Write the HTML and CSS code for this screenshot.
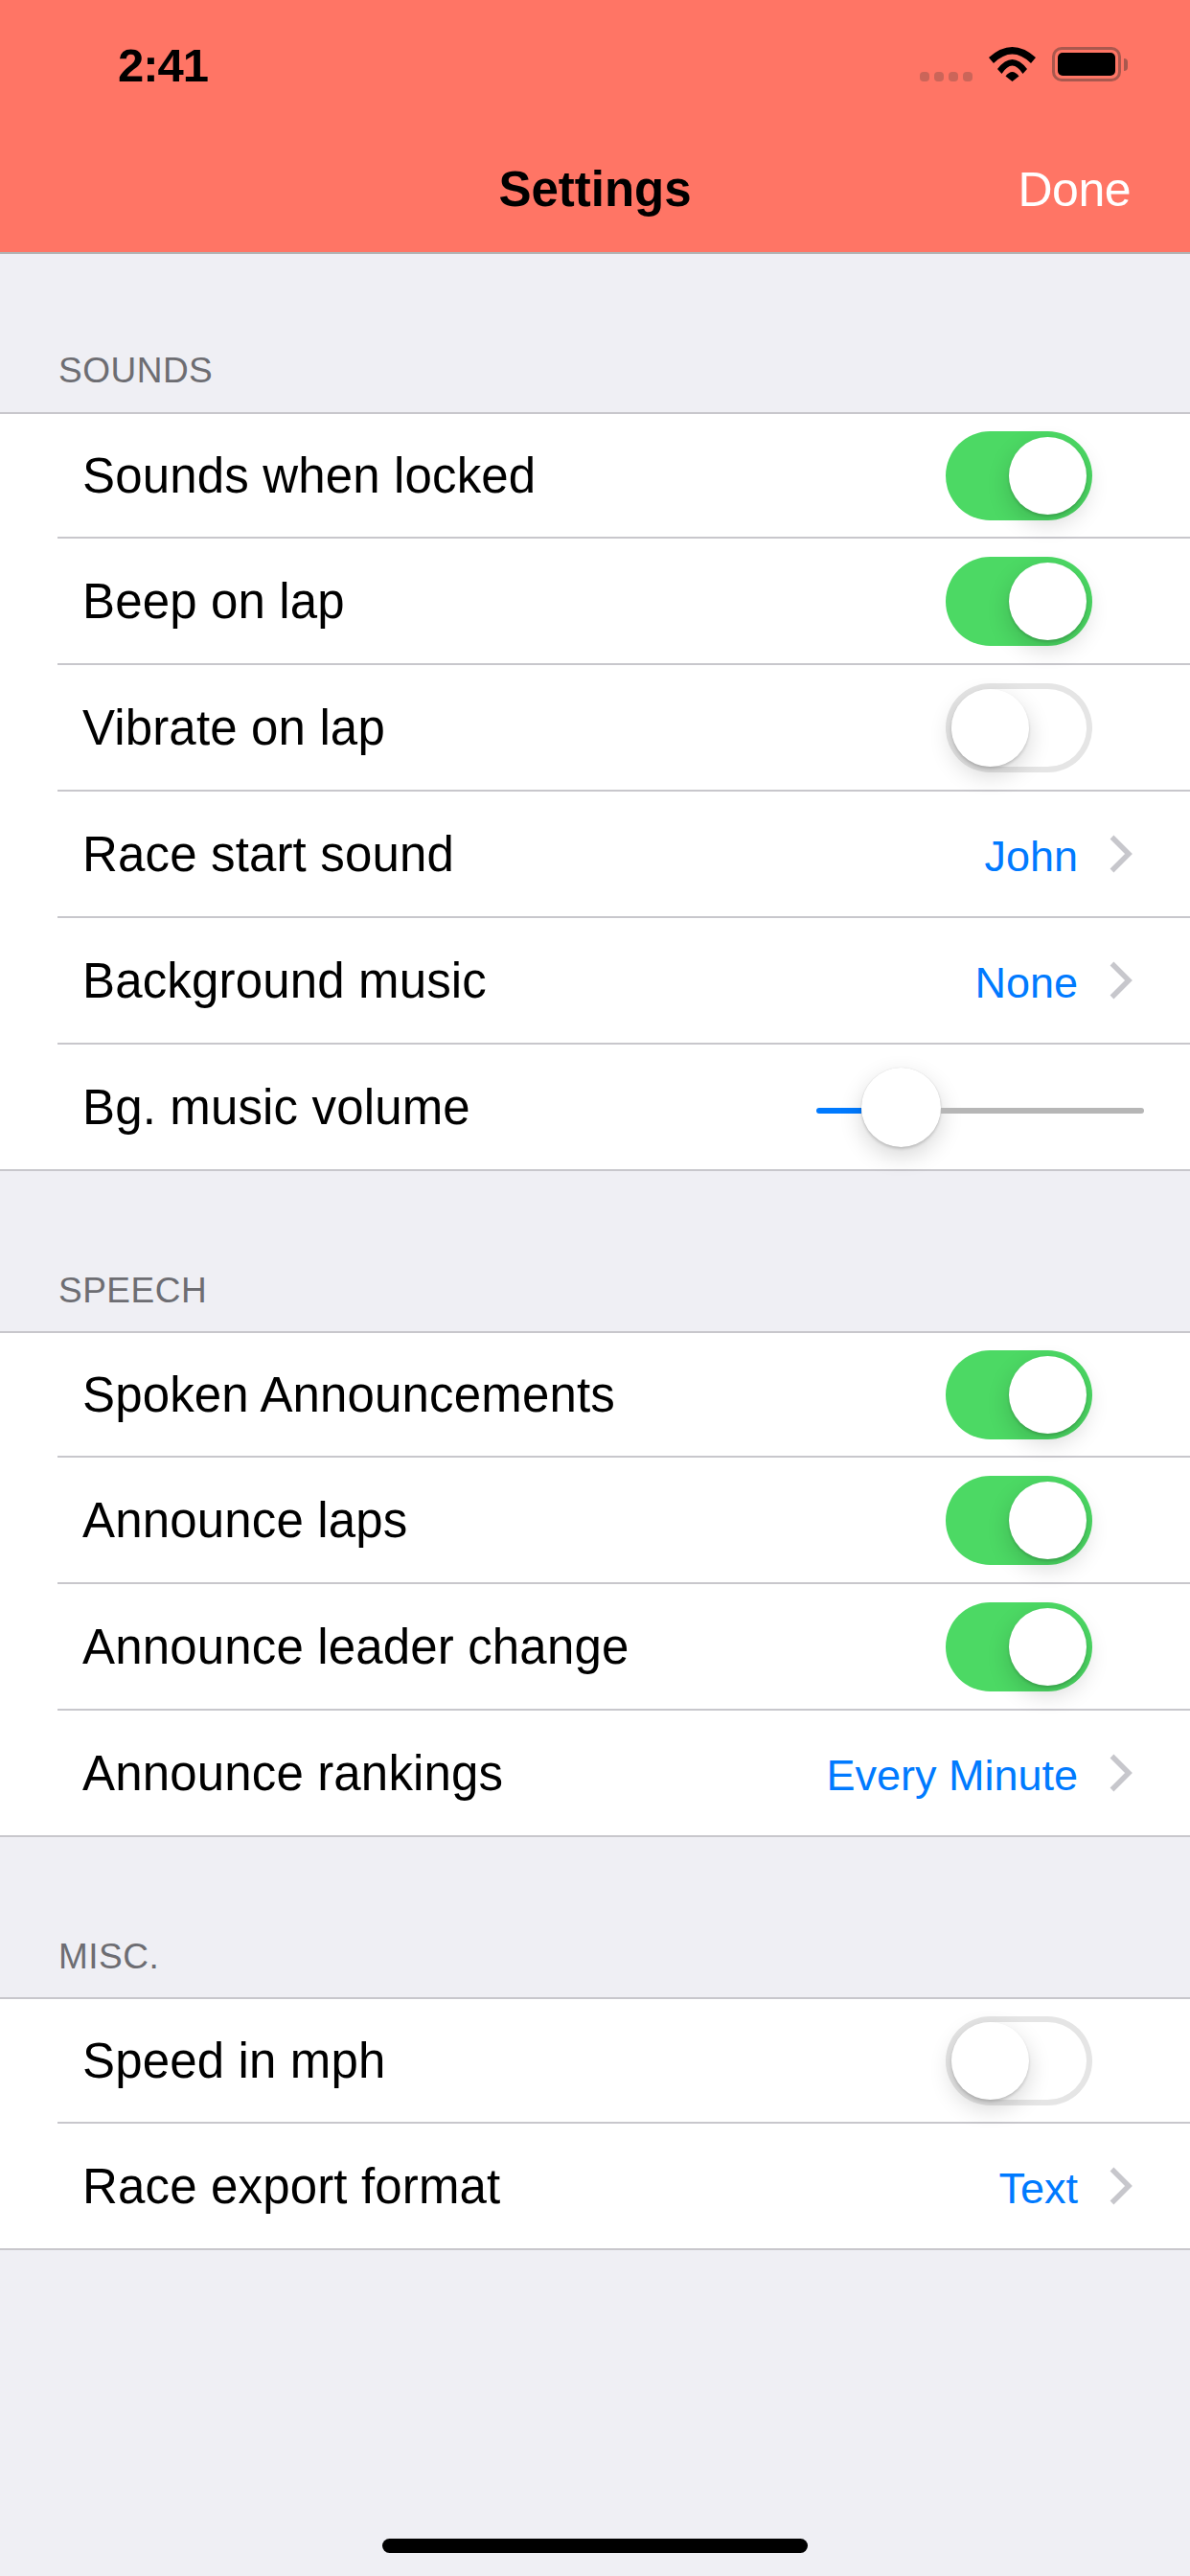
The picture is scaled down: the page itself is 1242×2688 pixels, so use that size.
FILE: index.html
```html
<!DOCTYPE html>
<html lang="en">
<head>
    <meta charset="UTF-8">
    <title>Settings</title>
    <link rel="stylesheet" href="styles.css">
</head>
<body>
    <!-- Header -->
    <div class="header">
        <div class="status-bar">
            <span class="time">2:41</span>
            <div class="status-icons">
                <div class="signal"><i></i><i></i><i></i><i></i></div>
                <svg class="wifi" width="49" height="36" viewBox="0 0 49 36">
                    <path d="M0 11Q24.500 -11 49 11L44 17Q24.500 -2 5 17Z" fill="#000"/>
                    <path d="M9 23Q24.500 3 40 23L35.500 28Q24.500 11 13.500 28Z" fill="#000"/>
                    <path d="M17.500 30.500Q24.500 21.500 31.500 30.500L24.500 36Z" fill="#000"/>
                </svg>
                <div class="battery"><div class="battery-level"></div></div>
                <div class="battery-cap"></div>
            </div>
        </div>
        <div class="nav-bar">
            <span class="nav-title">Settings</span>
            <span class="nav-done">Done</span>
        </div>
    </div>

    <!-- Sounds -->
    <div class="section-title first">SOUNDS</div>
    <div class="group">
        <div class="row"><span class="label">Sounds when locked</span><span class="toggle on"><i></i></span></div>
        <div class="row"><span class="label">Beep on lap</span><span class="toggle on"><i></i></span></div>
        <div class="row"><span class="label">Vibrate on lap</span><span class="toggle"><i></i></span></div>
        <div class="row">
            <span class="label">Race start sound</span>
            <span class="value">John</span>
            <svg class="chevron" width="24" height="40" viewBox="0 0 24 40"><path d="M2.500 2.500L20 20L2.500 37.500" fill="none" stroke="#c7c7cc" stroke-width="5.500"/></svg>
        </div>
        <div class="row">
            <span class="label">Background music</span>
            <span class="value">None</span>
            <svg class="chevron" width="24" height="40" viewBox="0 0 24 40"><path d="M2.500 2.500L20 20L2.500 37.500" fill="none" stroke="#c7c7cc" stroke-width="5.500"/></svg>
        </div>
        <div class="row">
            <span class="label">Bg. music volume</span>
            <div class="slider">
                <div class="slider-fill"></div>
                <div class="slider-thumb"></div>
                <div class="slider-rest"></div>
            </div>
        </div>
    </div>

    <!-- Speech -->
    <div class="section-title">SPEECH</div>
    <div class="group">
        <div class="row"><span class="label">Spoken Announcements</span><span class="toggle on"><i></i></span></div>
        <div class="row"><span class="label">Announce laps</span><span class="toggle on"><i></i></span></div>
        <div class="row"><span class="label">Announce leader change</span><span class="toggle on"><i></i></span></div>
        <div class="row">
            <span class="label">Announce rankings</span>
            <span class="value">Every Minute</span>
            <svg class="chevron" width="24" height="40" viewBox="0 0 24 40"><path d="M2.500 2.500L20 20L2.500 37.500" fill="none" stroke="#c7c7cc" stroke-width="5.500"/></svg>
        </div>
    </div>

    <!-- Misc -->
    <div class="section-title">MISC.</div>
    <div class="group">
        <div class="row"><span class="label">Speed in mph</span><span class="toggle"><i></i></span></div>
        <div class="row">
            <span class="label">Race export format</span>
            <span class="value">Text</span>
            <svg class="chevron" width="24" height="40" viewBox="0 0 24 40"><path d="M2.500 2.500L20 20L2.500 37.500" fill="none" stroke="#c7c7cc" stroke-width="5.500"/></svg>
        </div>
    </div>

    <div class="home-indicator"></div>
</body>
</html>
```

FILE: styles.css
```css
html, body {
    margin: 0;
    padding: 0;
}
body {
    position: relative;
    width: 1242px;
    height: 2688px;
    overflow: hidden;
    background-color: #efeff4;
    font-family: "Liberation Sans", Arial, sans-serif;
    color: #000;
}
.header {
    height: 263px;
    background-color: #ff7565;
    border-bottom: 2px solid #b2b2b2;
}
.status-bar {
    height: 132px;
    display: flex;
    justify-content: space-between;
    padding: 0 65px 0 123px;
}
.time {
    margin-top: 42px;
    font-size: 49px;
    line-height: 52px;
    font-weight: bold;
    letter-spacing: -1px;
}
.status-icons {
    display: flex;
    align-items: flex-start;
    padding-top: 49px;
}
.signal {
    display: flex;
    gap: 5px;
    margin-top: 26px;
    margin-right: 17px;
}
.signal i {
    width: 10px;
    height: 10px;
    border-radius: 4px;
    background-color: #cb6559;
}
.wifi {
    margin-right: 17px;
}
.battery {
    width: 72px;
    height: 36px;
    box-sizing: border-box;
    padding: 3px;
    border: 3px solid #a9584e;
    border-radius: 10px;
}
.battery-level {
    height: 100%;
    background-color: #000;
    border-radius: 5px;
}
.battery-cap {
    width: 4px;
    height: 13px;
    margin: 12px 0 0 3px;
    background-color: #a9584e;
    border-radius: 0 4px 4px 0;
}
.nav-bar {
    position: relative;
    height: 131px;
    display: flex;
    justify-content: center;
    align-items: flex-start;
}
.nav-title {
    margin-top: 36px;
    font-size: 51px;
    line-height: 60px;
    font-weight: bold;
}
.nav-done {
    position: absolute;
    right: 62px;
    top: 36px;
    font-size: 50px;
    line-height: 60px;
    letter-spacing: -0.5px;
    color: #fff;
}
.section-title {
    height: 167px;
    box-sizing: border-box;
    padding: 103px 0 0 61px;
    font-size: 37px;
    line-height: 44px;
    letter-spacing: 0.5px;
    color: #6d6d72;
}
.section-title.first {
    height: 165px;
    padding-top: 100px;
}
.group {
    background-color: #fff;
    border-top: 2px solid #c8c7cc;
    border-bottom: 2px solid #c8c7cc;
}
.row {
    height: 130px;
    margin-left: 60px;
    padding-left: 26px;
    display: flex;
    align-items: center;
    border-bottom: 2px solid #c8c7cc;
}
.row:first-child {
    height: 128px;
}
.row:last-child {
    border-bottom: none;
}
.label {
    flex: 1;
    font-size: 51px;
    letter-spacing: 0.15px;
}
.value {
    font-size: 45px;
    color: #007aff;
    margin: 5px 33px 0 0;
}
.chevron {
    margin-right: 60px;
}
.toggle {
    width: 153px;
    height: 93px;
    box-sizing: border-box;
    margin-right: 102px;
    padding: 6px;
    display: flex;
    border-radius: 47px;
    background-color: #fff;
    box-shadow: inset 0 0 0 6px #e5e5e5;
}
.toggle i {
    width: 81px;
    height: 81px;
    border-radius: 50%;
    background-color: #fff;
    box-shadow: 0 9px 24px rgba(0, 0, 0, 0.16), 0 2px 3px rgba(0, 0, 0, 0.16);
}
.toggle.on {
    justify-content: flex-end;
    background-color: #4cd964;
    box-shadow: none;
}
.slider {
    width: 342px;
    height: 83px;
    margin-right: 48px;
    display: flex;
    align-items: center;
}
.slider-fill,
.slider-rest {
    height: 6px;
    margin-top: 7px;
}
.slider-fill {
    width: 47px;
    background-color: #007aff;
    border-radius: 3px 0 0 3px;
}
.slider-rest {
    flex: 1;
    background-color: #b6b6b6;
    border-radius: 0 3px 3px 0;
}
.slider-thumb {
    width: 83px;
    height: 83px;
    flex-shrink: 0;
    border-radius: 50%;
    background-color: #fff;
    box-shadow: 0 9px 24px rgba(0, 0, 0, 0.16), 0 2px 3px rgba(0, 0, 0, 0.16), 0 0 1px rgba(0, 0, 0, 0.15);
}
.home-indicator {
    position: absolute;
    left: 399px;
    bottom: 24px;
    width: 444px;
    height: 15px;
    border-radius: 8px;
    background-color: #000;
}
```
